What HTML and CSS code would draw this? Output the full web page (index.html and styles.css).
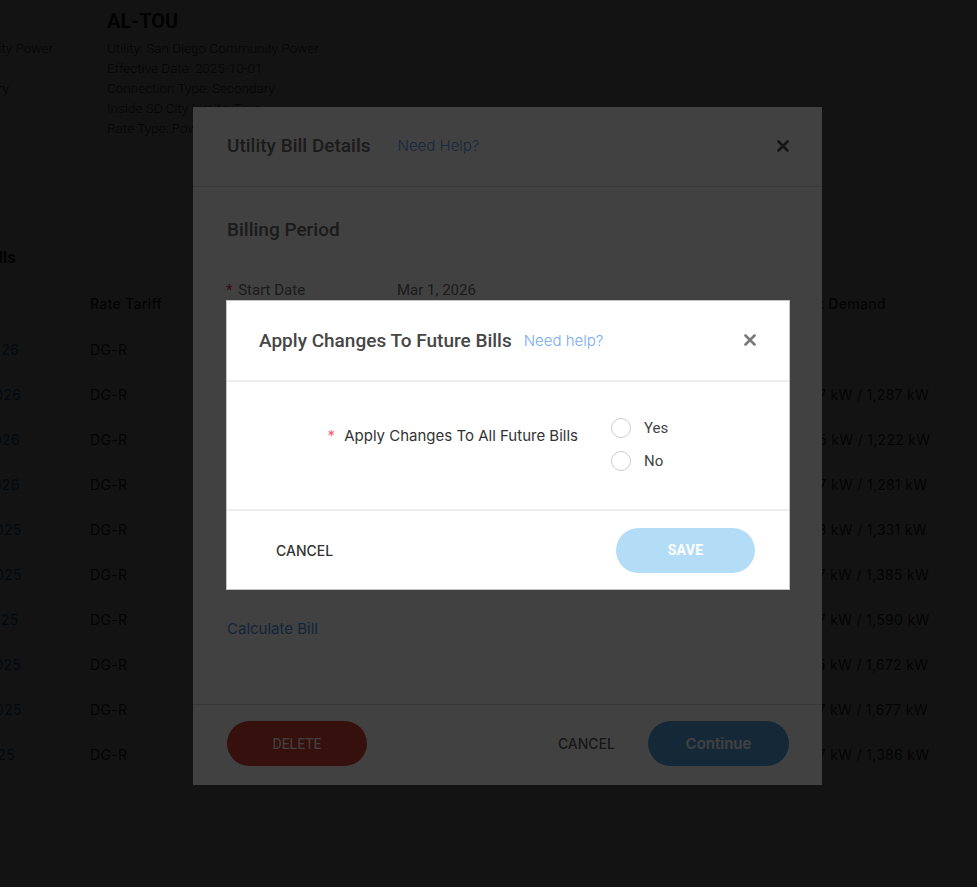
FILE: index.html
```html
<!DOCTYPE html>
<html lang="en">
<head>
    <meta charset="UTF-8">
    <meta name="viewport" content="width=device-width, initial-scale=1.0">
    <title>Utility Bill Details</title>
    <link rel="stylesheet" href="styles.css">
</head>
<body>
    <div class="page">
        <div class="rate-cards">
            <div class="rate-card">
                <h2 class="rate-name">DG-R</h2>
                <p>Utility: San Diego Community Power</p>
                <p>Effective Date: 2025-10-01</p>
                <p>Connection Type: Secondary</p>
                <p>Inside SD City Limits: True</p>
                <p>Rate Type: Power</p>
            </div>
            <div class="rate-card">
                <h2 class="rate-name">AL-TOU</h2>
                <p>Utility: San Diego Community Power</p>
                <p>Effective Date: 2025-10-01</p>
                <p>Connection Type: Secondary</p>
                <p>Inside SD City Limits: True</p>
                <p>Rate Type: Power Supply</p>
            </div>
        </div>

        <section class="bills">
            <h3 class="bills-title">Utility Bills</h3>
            <table class="bills-table">
                <colgroup>
                    <col class="col-date">
                    <col class="col-tariff">
                    <col class="col-usage">
                    <col class="col-cost">
                    <col class="col-demand">
                </colgroup>
                <thead>
                    <tr><th>Bill Date</th><th>Rate Tariff</th><th>Usage</th><th>Total Cost</th><th>Peak Demand</th></tr>
                </thead>
                <tbody>
                    <tr><td><a href="#">Apr 1, 2026</a></td><td>DG-R</td><td>412,880 kWh</td><td>$98,410.22</td><td>-</td></tr>
                    <tr><td><a href="#">Mar 1, 2026</a></td><td>DG-R</td><td>408,114 kWh</td><td>$97,102.50</td><td>1,287 kW / 1,287 kW</td></tr>
                    <tr><td><a href="#">Feb 1, 2026</a></td><td>DG-R</td><td>396,540 kWh</td><td>$95,880.13</td><td>1,245 kW / 1,222 kW</td></tr>
                    <tr><td><a href="#">Jan 1, 2026</a></td><td>DG-R</td><td>421,006 kWh</td><td>$101,337.70</td><td>1,407 kW / 1,281 kW</td></tr>
                    <tr><td><a href="#">Dec 1, 2025</a></td><td>DG-R</td><td>433,915 kWh</td><td>$104,215.41</td><td>1,473 kW / 1,331 kW</td></tr>
                    <tr><td><a href="#">Nov 1, 2025</a></td><td>DG-R</td><td>447,262 kWh</td><td>$108,940.08</td><td>1,597 kW / 1,385 kW</td></tr>
                    <tr><td><a href="#">Oct 1, 2025</a></td><td>DG-R</td><td>469,801 kWh</td><td>$113,662.94</td><td>1,627 kW / 1,590 kW</td></tr>
                    <tr><td><a href="#">Sep 1, 2025</a></td><td>DG-R</td><td>481,377 kWh</td><td>$117,020.35</td><td>1,675 kW / 1,672 kW</td></tr>
                    <tr><td><a href="#">Aug 1, 2025</a></td><td>DG-R</td><td>478,520 kWh</td><td>$116,481.19</td><td>1,677 kW / 1,677 kW</td></tr>
                    <tr><td><a href="#">Jul 1, 2025</a></td><td>DG-R</td><td>440,096 kWh</td><td>$105,774.60</td><td>1,387 kW / 1,386 kW</td></tr>
                </tbody>
            </table>
        </section>
    </div>

    <div class="backdrop"></div>

    <div class="bill-modal">
        <div class="bill-modal-header">
            <h2 class="bill-modal-title">Utility Bill Details</h2>
            <a href="#" class="bill-help">Need Help?</a>
            <button class="close-button">
                <svg width="12" height="12" viewBox="0 0 12 12"><path d="M1.5 1.5l9 9M10.5 1.5l-9 9" stroke="currentColor" stroke-width="2.6" stroke-linecap="round"/></svg>
            </button>
        </div>
        <div class="bill-modal-body">
            <h3 class="section-title">Billing Period</h3>
            <div class="fields">
                <div class="field-row"><span class="field-label"><span class="required">*</span> Start Date</span><span class="field-value">Mar 1, 2026</span></div>
                <div class="field-row"><span class="field-label"><span class="required">*</span> End Date</span><span class="field-value">Mar 31, 2026</span></div>
                <div class="field-row"><span class="field-label"><span class="required">*</span> Rate Tariff</span><span class="field-value">DG-R</span></div>
                <div class="field-row"><span class="field-label">Total Usage</span><span class="field-value">408,114 kWh</span></div>
                <div class="field-row"><span class="field-label">Total Cost</span><span class="field-value">$97,102.50</span></div>
            </div>
            <a href="#" class="calc-link">Calculate Bill</a>
        </div>
        <div class="bill-modal-footer">
            <button class="delete-button">DELETE</button>
            <button class="text-button">CANCEL</button>
            <button class="continue-button">Continue</button>
        </div>
    </div>

    <div class="backdrop backdrop-top"></div>

    <div class="apply-modal">
        <div class="apply-header">
            <h2 class="apply-title">Apply Changes To Future Bills</h2>
            <a href="#" class="apply-help">Need help?</a>
            <button class="close-button close-light">
                <svg width="12" height="12" viewBox="0 0 12 12"><path d="M1.5 1.5l9 9M10.5 1.5l-9 9" stroke="currentColor" stroke-width="2.6" stroke-linecap="round"/></svg>
            </button>
        </div>
        <div class="apply-body">
            <div class="apply-label"><span class="required">*</span> Apply Changes To All Future Bills</div>
            <div class="radio-group">
                <label class="radio-option"><input type="radio" name="future"> Yes</label>
                <label class="radio-option"><input type="radio" name="future"> No</label>
            </div>
        </div>
        <div class="apply-footer">
            <button class="text-button apply-cancel">CANCEL</button>
            <button class="save-button" disabled>SAVE</button>
        </div>
    </div>
</body>
</html>
```

FILE: styles.css
```css
* {
    box-sizing: border-box;
}

body {
    margin: 0;
    height: 887px;
    overflow: hidden;
    background: #fff;
    color: #333;
    font-family: "Inter", "Noto Sans", sans-serif;
}

button {
    font-family: inherit;
    cursor: pointer;
}

a {
    text-decoration: none;
}

/* page behind the dialogs */
.page {
    padding-top: 9px;
}

.rate-cards {
    display: flex;
    margin-left: -159px;
}

.rate-card {
    width: 266px;
    flex-shrink: 0;
    font-family: Roboto, sans-serif;
}

.rate-name {
    margin: 0 0 5px;
    font-size: 20px;
    line-height: 24px;
    font-weight: 700;
    color: #222;
}

.rate-card p {
    margin: 0;
    font-size: 13.5px;
    line-height: 20px;
    font-weight: 300;
    white-space: nowrap;
}

.bills {
    margin: 107px 0 0 -60px;
}

.bills-title {
    margin: 0 0 10px -6px;
    font-family: Roboto, sans-serif;
    font-size: 17px;
    line-height: 24px;
    font-weight: 700;
    color: #222;
}

.bills-table {
    border-collapse: collapse;
    table-layout: fixed;
    width: 1057px;
    font-size: 14px;
    letter-spacing: 0.3px;
}

.col-date { width: 150px; }
.col-tariff { width: 160px; }
.col-usage { width: 250px; }
.col-cost { width: 290px; }
.col-demand { width: 207px; }

.bills-table th {
    height: 48px;
    padding: 0;
    text-align: left;
    font-weight: 500;
}

.bills-table td {
    height: 45px;
    padding: 0;
    white-space: nowrap;
}

.bills-table td a {
    color: #1f6fc5;
}

.backdrop {
    position: fixed;
    inset: 0;
    background: rgba(0, 0, 0, 0.71);
}

.backdrop-top {
    background: rgba(0, 0, 0, 0.745);
}

.close-button {
    margin-left: auto;
    padding: 0;
    border: none;
    background: none;
    display: flex;
    color: #555;
}

.required {
    color: #e03232;
    margin-right: 2px;
}

/* Utility Bill Details */
.bill-modal {
    position: fixed;
    left: 193px;
    top: 107px;
    width: 629px;
    height: 678px;
    background: #fff;
    display: flex;
    flex-direction: column;
}

.bill-modal-header {
    height: 80px;
    flex-shrink: 0;
    display: flex;
    align-items: center;
    padding: 0 33px 2px 34px;
    border-bottom: 1px solid #ddd;
}

.bill-modal-title {
    margin: 0;
    font-family: Roboto, sans-serif;
    font-size: 19px;
    font-weight: 500;
    color: #6a6a6a;
}

.bill-help {
    margin-left: 27px;
    font-size: 15px;
    font-weight: 300;
    color: #5a9ef0;
}

.bill-modal-body {
    flex: 1;
    padding: 31px 33px 0 34px;
}

.section-title {
    margin: 0;
    font-family: Roboto, sans-serif;
    font-size: 19px;
    line-height: 24px;
    font-weight: 500;
    color: #6a6a6a;
}

.fields {
    margin-top: 38px;
    display: flex;
    flex-direction: column;
    gap: 40px;
}

.field-row {
    display: flex;
    margin-left: -1px;
    line-height: 20px;
    font-family: Roboto, sans-serif;
    font-size: 15px;
    color: #6a6a6a;
}

.field-label {
    width: 171px;
}

.calc-link {
    display: inline-block;
    margin-top: 79px;
    font-size: 15px;
    line-height: 20px;
    color: #4a90e2;
}

.bill-modal-footer {
    height: 81px;
    flex-shrink: 0;
    display: flex;
    align-items: center;
    padding: 0 33px 3px 34px;
    border-top: 1px solid #ddd;
}

.delete-button,
.continue-button {
    height: 45px;
    border: none;
    border-radius: 23px;
    color: #fff;
    font-size: 14px;
}

.delete-button {
    width: 140px;
    background: #d03f33;
    font-family: Roboto, sans-serif;
}

.text-button {
    padding: 0;
    border: none;
    background: none;
    font-size: 14px;
    font-weight: 500;
    color: #5a5a5a;
}

.bill-modal-footer .text-button {
    margin-left: auto;
}

.continue-button {
    width: 141px;
    margin-left: 33px;
    background: #4e9ddc;
    font-size: 15px;
    font-weight: 600;
}

/* Apply Changes To Future Bills */
.apply-modal {
    position: fixed;
    left: 226px;
    top: 300px;
    width: 564px;
    background: #fff;
    border: 1px solid #c4c4c4;
}

.apply-header {
    height: 81px;
    display: flex;
    align-items: center;
    padding: 0 33px 1px 32px;
    border-bottom: 2px solid #ececf1;
}

.apply-title {
    margin: 0;
    font-family: Roboto, sans-serif;
    font-size: 19px;
    font-weight: 500;
    color: #464646;
}

.apply-help {
    margin-left: 12px;
    font-size: 15px;
    font-weight: 300;
    color: #73acf3;
}

.close-light {
    color: #7a7a7a;
}

.apply-body {
    display: flex;
    padding: 36px 0 38px 33px;
}

.apply-label {
    width: 318px;
    padding-top: 8px;
    text-align: right;
    font-size: 15px;
    line-height: 20px;
    color: #333;
}

.apply-label .required {
    color: #f25c6b;
    margin-right: 5px;
}

.radio-group {
    margin-left: 33px;
    display: flex;
    flex-direction: column;
    gap: 13px;
}

.radio-option {
    display: flex;
    align-items: center;
    gap: 13px;
    font-family: Roboto, sans-serif;
    font-size: 15px;
    line-height: 20px;
    color: #444;
}

.radio-option input {
    appearance: none;
    width: 20px;
    height: 20px;
    margin: 0;
    border: 1px solid #c9cbd6;
    border-radius: 50%;
    background: #fff;
}

.apply-footer {
    height: 80px;
    display: flex;
    align-items: center;
    justify-content: space-between;
    padding: 0 34px 0 49px;
    border-top: 2px solid #ececf1;
}

.apply-cancel {
    color: #333;
}

.save-button {
    width: 139px;
    height: 45px;
    border: none;
    border-radius: 23px;
    background: #b3dcf6;
    color: #fff;
    font-family: Roboto, sans-serif;
    font-size: 14px;
    font-weight: 700;
    letter-spacing: 0.3px;
    cursor: default;
}
```
